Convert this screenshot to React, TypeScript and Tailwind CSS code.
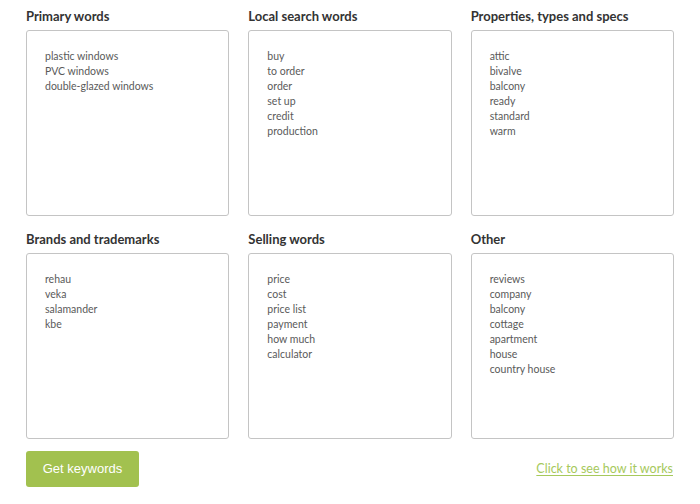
import React from 'react';

interface WordGroup {
    title: string;
    words: string[];
}

const groups: WordGroup[] = [
    { title: 'Primary words', words: ['plastic windows', 'PVC windows', 'double-glazed windows'] },
    { title: 'Local search words', words: ['buy', 'to order', 'order', 'set up', 'credit', 'production'] },
    { title: 'Properties, types and specs', words: ['attic', 'bivalve', 'balcony', 'ready', 'standard', 'warm'] },
    { title: 'Brands and trademarks', words: ['rehau', 'veka', 'salamander', 'kbe'] },
    { title: 'Selling words', words: ['price', 'cost', 'price list', 'payment', 'how much', 'calculator'] },
    { title: 'Other', words: ['reviews', 'company', 'balcony', 'cottage', 'apartment', 'house', 'country house'] },
];

const WordBox: React.FC<{ group: WordGroup }> = ({ group }) => (
    <div>
        <h3 className="text-[13px] leading-4 font-bold text-[#333333] mb-[6px]">{group.title}</h3>
        <div className="h-[186px] border border-[#c4c4c4] rounded-[3px] bg-white pt-[18px] px-[18px]">
            {group.words.map((w, i) => (
                <div key={i} className="text-[10.5px] leading-[15px] text-[#5a5a5a]">
                    {w}
                </div>
            ))}
        </div>
    </div>
);

export default function App() {
    return (
        <div className="w-[700px] h-[504px] bg-white px-[26px] pt-[8px] font-['Lato',sans-serif]">
            <div className="grid grid-cols-3 gap-x-[19px] gap-y-[15px]">
                {groups.map(g => (
                    <WordBox key={g.title} group={g} />
                ))}
            </div>
            <div className="flex items-center justify-between mt-[12px]">
                <button className="w-[113px] h-[36px] rounded-[3px] bg-[#a2c14f] text-white text-[13px] font-['Liberation_Sans',Arial,sans-serif]">
                    Get keywords
                </button>
                <a href="#" className="text-[12.5px] text-[#a6c95c] underline underline-offset-2 mr-[1px]">
                    Click to see how it works
                </a>
            </div>
        </div>
    );
}
